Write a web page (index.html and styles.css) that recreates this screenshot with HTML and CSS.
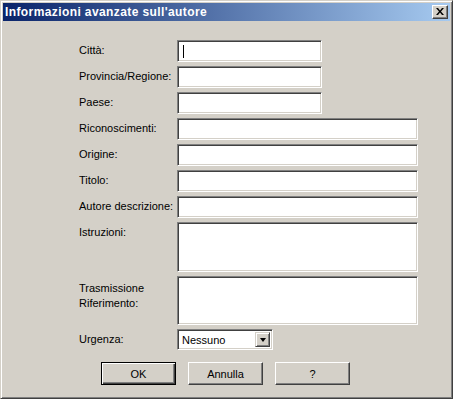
FILE: index.html
```html
<!DOCTYPE html>
<html lang="it">
<head>
    <meta charset="UTF-8">
    <title>Informazioni avanzate sull'autore</title>
    <link rel="stylesheet" href="styles.css">
</head>
<body>
    <div class="window">
        <div class="titlebar">
            <span class="title">Informazioni avanzate sull'autore</span>
            <span class="close">
                <svg width="8" height="7" viewBox="0 0 8 7">
                    <path d="M0 0h2l2 2.5L6 0h2L5 3.5 8 7H6L4 4.5 2 7H0l3-3.5z" fill="#000"/>
                </svg>
            </span>
        </div>
        <div class="body">
            <div class="form">
                <div class="lbl">Città:</div>
                <div class="field short"><span class="caret"></span></div>

                <div class="lbl">Provincia/Regione:</div>
                <div class="field short"></div>

                <div class="lbl">Paese:</div>
                <div class="field short"></div>

                <div class="lbl">Riconoscimenti:</div>
                <div class="field"></div>

                <div class="lbl">Origine:</div>
                <div class="field"></div>

                <div class="lbl">Titolo:</div>
                <div class="field"></div>

                <div class="lbl">Autore descrizione:</div>
                <div class="field"></div>

                <div class="lbl">Istruzioni:</div>
                <div class="field area first"></div>

                <div class="lbl two">Trasmissione<br>Riferimento:</div>
                <div class="field area"></div>

                <div class="lbl">Urgenza:</div>
                <div class="combo">
                    <span class="combo-text">Nessuno</span>
                    <span class="combo-btn"><span class="arrow"></span></span>
                </div>
            </div>
            <div class="buttons">
                <div class="btn default">OK</div>
                <div class="btn">Annulla</div>
                <div class="btn">?</div>
            </div>
        </div>
    </div>
</body>
</html>
```

FILE: styles.css
```css
*{
    margin:0;
    padding:0;
    box-sizing: border-box;
}
body{
    background: #d4d0c8;
    font-family: "Liberation Sans", Arial, sans-serif;
    font-size: 11px;
    color: #000;
}
.window{
    width: 453px;
    height: 399px;
    background: #d4d0c8;
    border: 1px solid;
    border-color: #d4d0c8 #404040 #404040 #d4d0c8;
    box-shadow: inset 1px 1px #fff, inset -1px -1px #808080;
    padding: 2px;
    display: flex;
    flex-direction: column;
}
.titlebar{
    height: 18px;
    background: linear-gradient(to right, #0a246a, #a6caf0);
    display: flex;
    align-items: center;
    justify-content: space-between;
    padding: 0 2px;
}
.title{
    color: #fff;
    font-weight: bold;
    font-size: 12px;
    letter-spacing: 0.4px;
}
.close{
    width: 16px;
    height: 14px;
    background: #d4d0c8;
    border: 1px solid;
    border-color: #fff #404040 #404040 #fff;
    box-shadow: inset -1px -1px #808080;
    display: flex;
    align-items: center;
    justify-content: center;
}
.close svg{
    display: block;
    margin-left: -1px;
    margin-top: -1px;
}
.body{
    flex: 1;
    padding: 19px 0 0 76px;
}
.form{
    display: grid;
    grid-template-columns: 98px 241px;
    row-gap: 4px;
}
.lbl{
    padding-top: 4px;
    line-height: 13px;
}
.lbl.two{
    padding-top: 5px;
    line-height: 15px;
}
.field{
    height: 22px;
    background: #fff;
    border: 1px solid;
    border-color: #808080 #fff #fff #808080;
    box-shadow: inset 1px 1px #404040, inset -1px -1px #d4d0c8;
    padding: 4px 0 0 5px;
}
.field.short{
    width: 145px;
}
.field.area{
    height: 49px;
}
.field.area.first{
    height: 50px;
}
.caret{
    display: block;
    width: 1px;
    height: 13px;
    background: #000;
}
.combo{
    width: 96px;
    height: 21px;
    background: #fff;
    border: 1px solid;
    border-color: #808080 #fff #fff #808080;
    box-shadow: inset 1px 1px #404040, inset -1px -1px #d4d0c8;
    padding: 2px;
    display: flex;
    align-items: center;
}
.combo-text{
    flex: 1;
    padding-left: 2px;
}
.combo-btn{
    width: 15px;
    height: 15px;
    background: #d4d0c8;
    border: 1px solid;
    border-color: #d4d0c8 #404040 #404040 #d4d0c8;
    box-shadow: inset 1px 1px #fff, inset -1px -1px #808080;
    display: flex;
    align-items: center;
    justify-content: center;
}
.arrow{
    width: 0;
    height: 0;
    border-left: 3.5px solid transparent;
    border-right: 3.5px solid transparent;
    border-top: 4px solid #000;
}
.buttons{
    display: flex;
    gap: 12px;
    margin-top: 12px;
    padding-left: 22px;
}
.btn{
    width: 75px;
    height: 23px;
    background: #d4d0c8;
    border: 1px solid;
    border-color: #fff #404040 #404040 #fff;
    box-shadow: inset -1px -1px #808080;
    display: flex;
    align-items: center;
    justify-content: center;
}
.btn.default{
    border: 1px solid #000;
    box-shadow: inset 1px 1px #fff, inset -1px -1px #404040, inset -2px -2px #808080;
}
```
